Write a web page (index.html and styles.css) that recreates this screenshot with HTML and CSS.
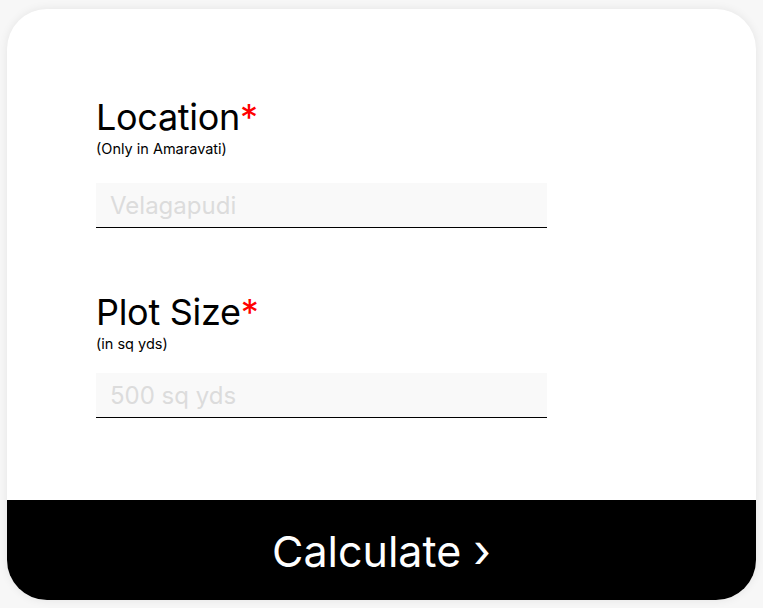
FILE: index.html
```html
<!DOCTYPE html>
<html lang="en">
<head>
  <meta charset="UTF-8">
  <meta name="viewport" content="width=device-width, initial-scale=1.0">
  <title>Land Calculator</title>
  <link rel="stylesheet" href="styles.css">
</head>
<body>
  <div class="card">
    <div class="form">
      <div class="field field-location">
        <label for="location">Location<span class="req">*</span></label>
        <div class="hint">(Only in Amaravati)</div>
        <input id="location" type="text" placeholder="Velagapudi">
      </div>
      <div class="field field-plot">
        <label for="plot">Plot Size<span class="req">*</span></label>
        <div class="hint">(in sq yds)</div>
        <input id="plot" type="text" placeholder="500 sq yds">
      </div>
    </div>
    <button class="calc-btn">Calculate <span class="arrow">&#8250;</span></button>
  </div>
</body>
</html>
```

FILE: styles.css
```css
body {
  font-family: Inter, "Open Sans", sans-serif;
  background-color: #f7f7f7;
  margin: 0;
  padding: 9px 7px;
}
.card {
  width: 749px;
  height: 591px;
  background-color: #fff;
  border-radius: 40px;
  box-shadow: 0 0 10px rgba(0, 0, 0, 0.08);
  overflow: hidden;
  display: flex;
  flex-direction: column;
}
.form {
  flex: 1;
  padding: 90px 0 0 89px;
}
.field {
  margin-bottom: 66px;
}
.field label {
  display: block;
  font-size: 36px;
  line-height: 36px;
  letter-spacing: -0.3px;
  color: #000;
  margin-bottom: 6px;
}
.req {
  color: #ff0000;
}
.hint {
  font-size: 14.5px;
  line-height: 16px;
  color: #000;
  margin-bottom: 26px;
}
.field-plot .hint {
  margin-bottom: 21px;
}
.field input {
  display: block;
  width: 451px;
  height: 45px;
  box-sizing: border-box;
  border: none;
  border-bottom: 1.5px solid #000;
  background-color: #f9f9f9;
  padding: 0 14px;
  font-family: inherit;
  font-size: 24px;
  outline: none;
}
.field input::placeholder {
  color: #dcdcdc;
}
.calc-btn {
  height: 100px;
  border: none;
  background-color: #000;
  color: #fff;
  font-family: inherit;
  font-size: 43px;
  cursor: pointer;
}
.arrow {
  font-size: 46px;
}
```
